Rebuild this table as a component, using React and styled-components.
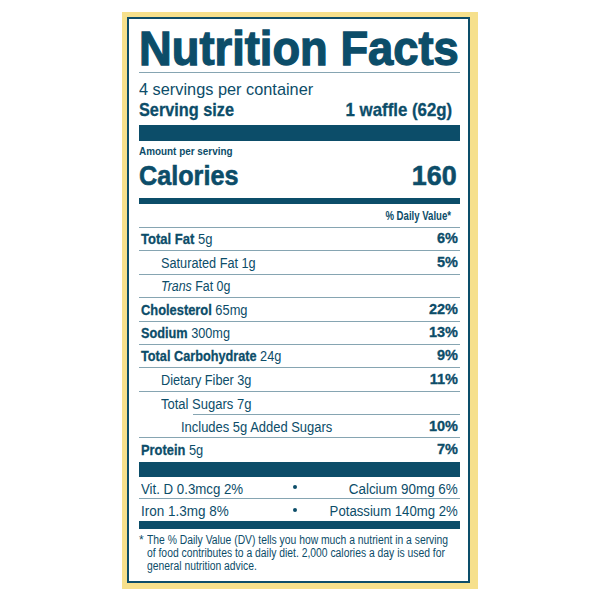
import React from 'react';
import styled, { createGlobalStyle } from 'styled-components';

const TEAL = '#0c4d69';
const RULE = '#86a5b2';
const YELLOW = '#f6e08c';

const nutrients = [
  { name: 'Total Fat', amount: '5g', dv: '6%', bold: true, sx: 0.84 },
  { name: 'Saturated Fat', amount: '1g', dv: '5%', level: 1, sx: 0.82 },
  { name: 'Trans', italic: true, amount: 'Fat 0g', level: 1, sx: 0.8 },
  { name: 'Cholesterol', amount: '65mg', dv: '22%', bold: true, sx: 0.83 },
  { name: 'Sodium', amount: '300mg', dv: '13%', bold: true, sx: 0.82 },
  { name: 'Total Carbohydrate', amount: '24g', dv: '9%', bold: true, sx: 0.82 },
  { name: 'Dietary Fiber', amount: '3g', dv: '11%', level: 1, sx: 0.82 },
  { name: 'Total Sugars', amount: '7g', level: 1, shortRule: true, sx: 0.84 },
  { name: 'Includes 5g Added Sugars', level: 2, dv: '10%', sx: 0.836 },
  { name: 'Protein', amount: '5g', dv: '7%', bold: true, last: true, sx: 0.83 },
];

const minerals = [
  [{ text: 'Vit. D 0.3mcg 2%', sx: 0.855 }, { text: 'Calcium 90mg 6%', sx: 0.867 }],
  [{ text: 'Iron 1.3mg 8%', sx: 0.87 }, { text: 'Potassium 140mg 2%', sx: 0.85 }],
];

const footLines = [
  'The % Daily Value (DV) tells you how much a nutrient in a serving',
  'of food contributes to a daily diet. 2,000 calories a day is used for',
  'general nutrition advice.',
];

export default function App() {
  return (
    <>
      <GlobalStyle />
      <Frame>
        <Label>
          <Title>
            <Cond $sx={0.925}>Nutrition Facts</Cond>
          </Title>
          <Servings>
            <Cond $sx={0.96}>4 servings per container</Cond>
          </Servings>
          <ServingSize>
            <Cond $sx={0.88}>Serving size</Cond>
            <Cond $sx={0.91} $right>1 waffle (62g)</Cond>
          </ServingSize>
          <Bar $h={16} />
          <Amount>
            <Cond $sx={0.9}>Amount per serving</Cond>
          </Amount>
          <Calories>
            <Cond $sx={0.9}>Calories</Cond>
            <Cond $sx={0.96} $right>160</Cond>
          </Calories>
          <Bar $h={6} />
          <DvHeader>
            <Cond $sx={0.8} $right>% Daily Value*</Cond>
          </DvHeader>
          {nutrients.map((n) => (
            <Row key={n.name} $last={n.last} $short={n.shortRule}>
              <RowName $level={n.level || 0}>
                <Cond $sx={n.sx}>
                  {n.bold ? <Strong>{n.name}</Strong> : n.italic ? <i>{n.name}</i> : n.name}
                  {n.amount ? ` ${n.amount}` : ''}
                </Cond>
              </RowName>
              {n.dv && (
                <Dv>
                  <Cond $sx={1} $right>{n.dv}</Cond>
                </Dv>
              )}
            </Row>
          ))}
          <Bar $h={15} />
          {minerals.map(([a, b], i) => (
            <MineralRow key={a.text} $last={i === minerals.length - 1}>
              <Cond $sx={a.sx}>{a.text}</Cond>
              <Dot />
              <MineralRight>
                <Cond $sx={b.sx} $right>{b.text}</Cond>
              </MineralRight>
            </MineralRow>
          ))}
          <Bar $h={8} />
          <Footnote>
            <Star>*</Star>
            <FootText>
              {footLines.map((l) => (
                <FootLine key={l}>{l}</FootLine>
              ))}
            </FootText>
          </Footnote>
        </Label>
      </Frame>
    </>
  );
}

const GlobalStyle = createGlobalStyle`
  body {
    margin: 0;
    background: #fff;
    font-family: "Liberation Sans", Arial, sans-serif;
    color: ${TEAL};
  }
`;

// Helvetica Condensed is not available, so squeeze Liberation Sans horizontally
const Cond = styled.span`
  display: inline-block;
  white-space: nowrap;
  transform: scaleX(${(p) => p.$sx ?? 0.86});
  transform-origin: ${(p) => (p.$right ? 'right' : 'left')} center;
`;

const Strong = styled.b`
  font-weight: 700;
  -webkit-text-stroke: 0.3px ${TEAL};
`;

const Frame = styled.div`
  width: 356px;
  margin: 12px auto 0;
  padding: 5px 8px 6px 5px;
  box-sizing: border-box;
  background: ${YELLOW};
`;

const Label = styled.div`
  border: 2px solid ${TEAL};
  background: #fff;
  padding: 0 8px 0 10px;
  display: flex;
  flex-direction: column;
`;

const Title = styled.div`
  height: 54px;
  box-sizing: border-box;
  padding-top: 5px;
  font-size: 49px;
  line-height: 49px;
  font-weight: 700;
  -webkit-text-stroke: 1.3px ${TEAL};
  border-bottom: 1px solid ${RULE};
`;

const Servings = styled.div`
  padding-top: 8px;
  font-size: 17px;
  line-height: 17px;
`;

const ServingSize = styled.div`
  display: flex;
  justify-content: space-between;
  padding: 3px 8px 5.5px 0;
  font-size: 18.5px;
  line-height: 18.5px;
  font-weight: 700;
  -webkit-text-stroke: 0.3px ${TEAL};
`;

const Bar = styled.div`
  height: ${(p) => p.$h}px;
  background: ${TEAL};
`;

const Amount = styled.div`
  padding-top: 5px;
  font-size: 11px;
  line-height: 11px;
  font-weight: 700;
`;

const Calories = styled.div`
  display: flex;
  justify-content: space-between;
  padding: 5.3px 3px 7.7px 0;
  font-size: 28px;
  line-height: 28px;
  font-weight: 700;
  -webkit-text-stroke: 0.6px ${TEAL};
`;

const DvHeader = styled.div`
  display: flex;
  justify-content: flex-end;
  padding: 5.8px 9px 5.2px 0;
  font-size: 12px;
  line-height: 12px;
  font-weight: 700;
  border-bottom: 1px solid ${RULE};
`;

const Row = styled.div`
  height: 23.4px;
  box-sizing: border-box;
  display: flex;
  align-items: center;
  justify-content: space-between;
  padding: 0 2px 0 1.5px;
  font-size: 15.5px;
  line-height: 15.5px;
  border-bottom: ${(p) => (p.$last || p.$short ? 'none' : `1px solid ${RULE}`)};
  background: ${(p) =>
    p.$short ? `linear-gradient(${RULE}, ${RULE}) 54px 100% / calc(100% - 54px) 1px no-repeat` : 'none'};
`;

const RowName = styled.span`
  padding-left: ${(p) => [0, 20.5, 40][p.$level]}px;
`;

const Dv = styled.span`
  font-size: 14.5px;
  font-weight: 700;
  -webkit-text-stroke: 0.3px ${TEAL};
`;

const MineralRow = styled.div`
  height: 22px;
  box-sizing: border-box;
  display: grid;
  grid-template-columns: minmax(0, 1fr) auto minmax(0, 1fr);
  align-items: center;
  padding: 2px 2px 0 1.5px;
  font-size: 15.5px;
  line-height: 15.5px;
  border-bottom: ${(p) => (p.$last ? 'none' : `1px solid ${RULE}`)};
`;

const MineralRight = styled.span`
  justify-self: end;
`;

const Dot = styled.span`
  width: 4px;
  height: 4px;
  border-radius: 50%;
  background: ${TEAL};
  margin: 0 9px 2px 0;
`;

const Footnote = styled.div`
  display: flex;
  padding: 5px 0 7px;
  font-size: 12px;
  line-height: 13.3px;
`;

const Star = styled.span`
  width: 7.5px;
  flex: none;
`;

const FootText = styled.div`
  display: flex;
  flex-direction: column;
`;

const FootLine = styled.span`
  white-space: nowrap;
  transform: scaleX(0.862);
  transform-origin: left center;
`;
